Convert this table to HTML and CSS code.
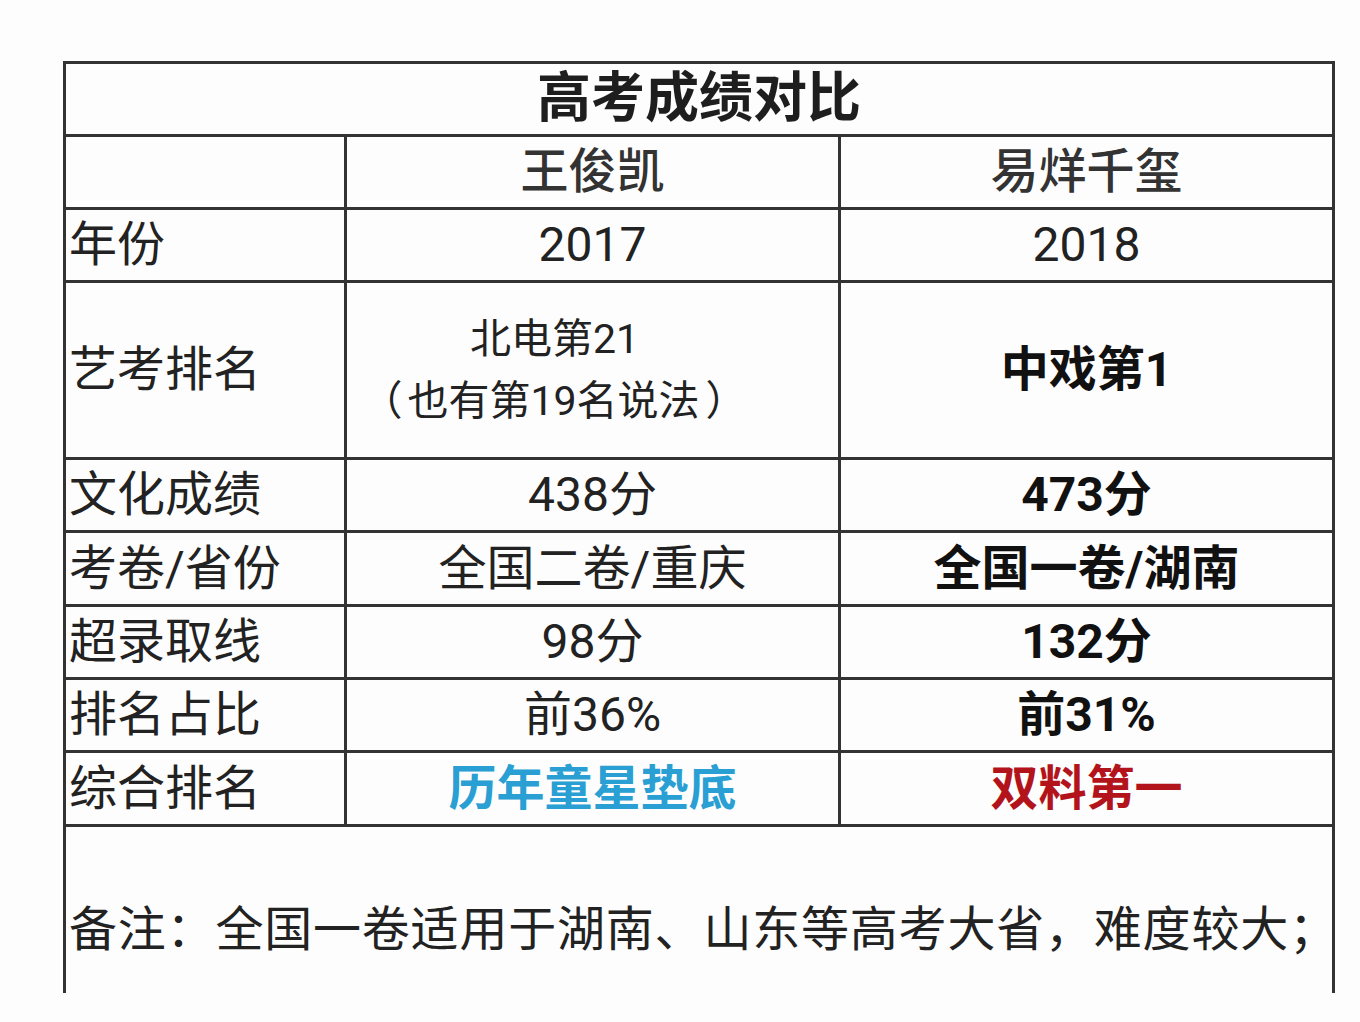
FILE: index.html
```html
<!DOCTYPE html>
<html lang="zh-CN">
<head>
<meta charset="utf-8">
<title>高考成绩对比</title>
<link rel="stylesheet" href="styles.css">
</head>
<body>
<div class="page">
  <table class="score">
    <colgroup>
      <col class="c1">
      <col class="c2">
      <col class="c3">
    </colgroup>
    <tr class="r-title"><td colspan="3" class="title">高考成绩对比</td></tr>
    <tr class="r"><td class="label"></td><td class="head">王俊凯</td><td class="head">易烊千玺</td></tr>
    <tr class="r"><td class="label">年份</td><td>2017</td><td>2018</td></tr>
    <tr class="r-tall"><td class="label">艺考排名</td><td class="small"><div>北电第21</div><div class="paren"><span class="pl">（</span>也有第19名说法<span class="pr">）</span></div></td><td class="bold">中戏第1</td></tr>
    <tr class="r"><td class="label">文化成绩</td><td>438分</td><td class="bold">473分</td></tr>
    <tr class="r r-plus"><td class="label">考卷/省份</td><td>全国二卷/重庆</td><td class="bold">全国一卷/湖南</td></tr>
    <tr class="r"><td class="label">超录取线</td><td>98分</td><td class="bold">132分</td></tr>
    <tr class="r"><td class="label">排名占比</td><td>前36%</td><td class="bold">前31%</td></tr>
    <tr class="r r-plus"><td class="label">综合排名</td><td class="bold blue">历年童星垫底</td><td class="bold red">双料第一</td></tr>
    <tr class="r-note"><td colspan="3" class="note">备注：全国一卷适用于湖南、山东等高考大省，难度较大；</td></tr>
  </table>
</div>
</body>
</html>
```
FILE: styles.css
```css
html, body {
  margin: 0;
  padding: 0;
  background: #fdfdfd;
}
.page {
  padding: 61px 0 0 63px;
  font-family: "Roboto", "Noto Sans CJK SC", "Noto Sans", sans-serif;
  color: #222;
}
.score {
  border-collapse: collapse;
  table-layout: fixed;
  width: 1272px;
}
.c1 { width: 281px; }
.c2 { width: 494px; }
.c3 { width: 494px; }
.score td {
  border: 3px solid #333;
  padding: 0;
  text-align: center;
  vertical-align: middle;
  font-size: 48px;
  line-height: 1.2;
  white-space: nowrap;
}
.r td { height: 70px; }
.r-plus td { height: 71px; }
.r-title td { height: 70px; }
.r-tall td { height: 174px; }
.score td.title {
  font-size: 54px;
  line-height: 1.15;
  font-weight: 700;
  color: #1e1e1e;
}
.score td.label {
  text-align: left;
  padding-left: 3px;
}
.head {
  font-weight: 500;
  color: #333;
}
.bold {
  font-weight: 700;
  color: #111;
}
.blue { color: #2a9fd3 !important; }
.red { color: #b3141c !important; }
.score td.small {
  font-size: 41px;
  line-height: 62px;
  color: #222;
  padding-right: 76px;
}
.paren {
  font-feature-settings: "halt";
}
.pl { padding: 0 5px 0 4px; }
.pr { padding: 0 5px 0 6px; }
.score td.note {
  height: 167px;
  border-bottom: none;
  text-align: left;
  vertical-align: top;
  padding: 74px 0 0 3px;
  box-sizing: border-box;
  letter-spacing: 0.8px;
}
```
